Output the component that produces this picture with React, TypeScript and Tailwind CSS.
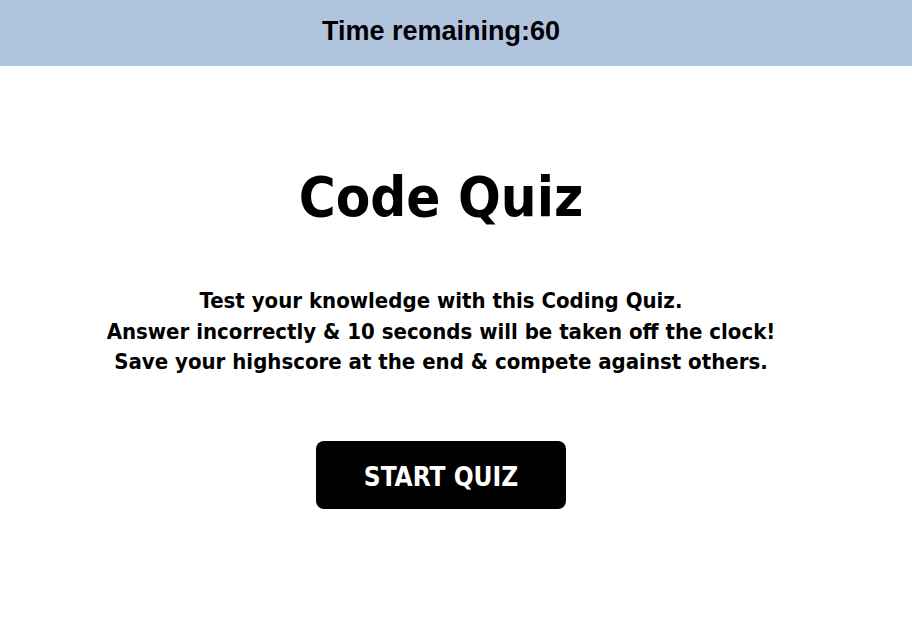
import React from "react";

export default function App() {
  const tahoma = { fontFamily: '"DejaVu Sans Condensed", "DejaVu Sans", sans-serif' };
  return (
    <div className="min-h-[633px] w-[912px] bg-white text-black">
      <header className="flex h-[66px] w-full items-center bg-[#b0c4de] pb-[4px]">
        <div
          className="w-[882px] text-center text-[27px] font-bold"
          style={{ fontFamily: '"Liberation Sans", Arial, sans-serif' }}
        >
          Time remaining:60
        </div>
      </header>

      <main className="flex w-[882px] flex-col items-center" style={tahoma}>
        <h1 className="mt-[96px] text-[56px] leading-[70px] font-bold">Code Quiz</h1>

        <p className="mt-[54px] text-center text-[22px] leading-[30.5px] font-bold">
          Test your knowledge with this Coding Quiz.
          <br />
          Answer incorrectly &amp; 10 seconds will be taken off the clock!
          <br />
          Save your highscore at the end &amp; compete against others.
        </p>

        <button className="mt-[63px] flex h-[68px] w-[250px] items-center justify-center rounded-lg bg-black pt-[5px] text-[26px] font-bold text-white">
          START QUIZ
        </button>
      </main>
    </div>
  );
}
